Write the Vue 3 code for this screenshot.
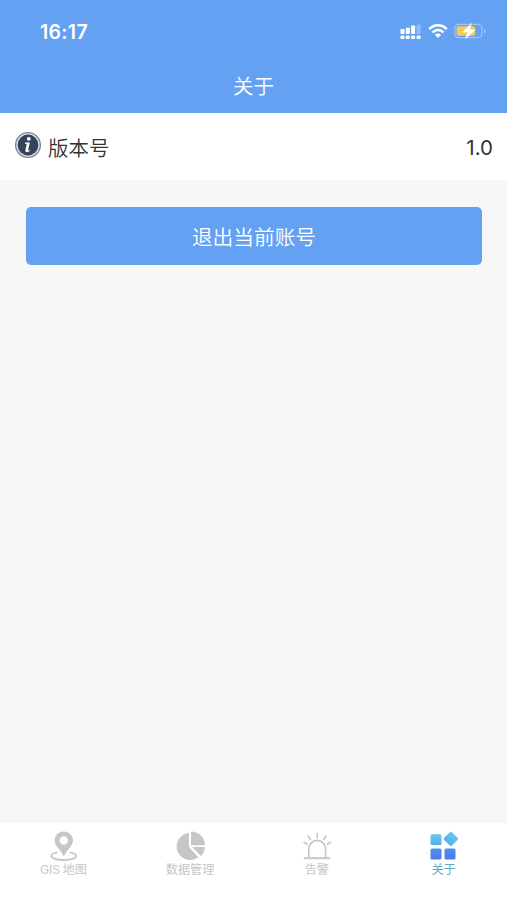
<template>
  <div class="page">
    <!-- 状态栏 + 标题 -->
    <header class="header">
      <div class="status">
        <span class="status__time">16:17</span>
        <div class="status__icons">
          <svg class="signal" width="22" height="16" viewBox="0 0 22 16">
            <g fill="#fff">
              <rect x="0.5" y="5" width="4" height="5" rx="0.8" />
              <rect x="5.8" y="3.8" width="4" height="6.2" rx="0.8" />
              <rect x="11.1" y="1.5" width="4" height="8.5" rx="0.8" />
              <rect x="16.6" y="0.5" width="4" height="9.5" rx="0.8" opacity=".3" />
              <rect x="0.5" y="11.5" width="4" height="3.6" rx="1" />
              <rect x="5.8" y="11.5" width="4" height="3.6" rx="1" />
              <rect x="11.1" y="11.5" width="4" height="3.6" rx="1" />
              <rect x="16.6" y="11.5" width="4" height="3.6" rx="1" />
            </g>
          </svg>
          <svg class="wifi" width="20" height="16" viewBox="0 0 20 16">
            <g fill="none" stroke="#fff" stroke-width="2.5">
              <path d="M1.2 6.2C6 .9 14 .9 18.8 6.2" />
              <path d="M4.5 9.5c3-3.2 8-3.2 11 0" />
            </g>
            <path d="M6.9 11.7c1.8-1.6 4.4-1.6 6.2 0L10 14.9z" fill="#fff" />
          </svg>
          <svg class="battery" width="33" height="18" viewBox="0 0 33 18">
            <rect x="0.8" y="2.3" width="27" height="13.4" rx="4" fill="none" stroke="#a0c6ec" stroke-width="1.2" />
            <path d="M29.8 6.5c2.4.8 2.4 4.2 0 5z" fill="#a0c6ec" />
            <rect x="2.6" y="4.2" width="18.6" height="9.6" rx="2" fill="#f3cd57" />
            <path d="M18 .8 8.4 10.2h5.2L11 17.4 21.6 7.5h-5.8z" fill="#fff" />
          </svg>
        </div>
      </div>
      <h1 class="header__title">关于</h1>
    </header>

    <!-- 版本号 -->
    <div class="cell">
      <svg class="cell__icon" width="28" height="28" viewBox="0 0 28 28">
        <circle cx="14" cy="14" r="12.4" fill="#d9dde3" stroke="#7d8492" stroke-width="1.3" />
        <circle cx="14" cy="14" r="10.4" fill="#35425b" />
        <circle cx="14.8" cy="7.8" r="1.9" fill="#fff" />
        <path d="M11 11.5h4.8l-1.7 7.7c-.1.6.7.5 1.8-.3l.3.6c-2.2 2.2-5.3 2.2-4.8-.2l1.4-6.6H11z" fill="#fff" />
      </svg>
      <span class="cell__label">版本号</span>
      <span class="cell__value">{{ version }}</span>
    </div>

    <main class="content">
      <button class="logout" type="button">退出当前账号</button>
    </main>

    <!-- 底部导航 -->
    <nav class="tabbar">
      <div
        v-for="tab in tabs"
        :key="tab.key"
        class="tabbar__item"
        :class="{ 'tabbar__item--active': tab.key === active }"
        @click="active = tab.key"
      >
        <svg v-if="tab.key === 'map'" width="30" height="30" viewBox="0 0 30 30">
          <path d="M9.5 21.4C5.5 22 3.3 23.3 3.3 25c0 2.3 5.5 4 12.5 4s12.5-1.7 12.5-4c0-1.7-2.5-3-6.5-3.6" fill="none" stroke="#c6c6c6" stroke-width="1.8" />
          <path d="M15.8.6c-5.3 0-9.2 3.9-9.2 8.9 0 5.500 6.200 9 9.200 16.100 3-7.100 9.200-10.600 9.200-16.100 0-5-3.900-8.900-9.200-8.900zm0 4.700a4.200 4.200 0 1 1 0 8.400 4.200 4.200 0 0 1 0-8.400z" fill="#c6c6c6" fill-rule="evenodd" />
        </svg>
        <svg v-else-if="tab.key === 'data'" width="30" height="30" viewBox="0 0 30 30">
          <g fill="#c6c6c6">
            <path d="M14 2v14l9.300 10.200A13.500 13.500 0 1 1 14 2z" />
            <path d="M16 .5c7.600 0 13.800 5.700 14 13.700H16z" />
            <path d="M17.200 16H30c-.2 3.700-1.700 6.700-4.200 9z" />
          </g>
        </svg>
        <svg v-else-if="tab.key === 'alarm'" width="30" height="30" viewBox="0 0 30 30">
          <g fill="none" stroke="#c6c6c6" stroke-width="1.6">
            <path d="M6.800 26.500v-8.700a8.400 8.400 0 0 1 16.800 0v8.700" />
            <path d="M1.800 27.200h26.400" stroke-width="2" />
            <path d="M15.200 2v5.500M6 4.500l2.800 4.600M24 4.500l-2.600 4.600M1.500 11l4.200 2.500M29 11l-4.200 2.500" />
          </g>
        </svg>
        <svg v-else width="30" height="30" viewBox="0 0 30 30">
          <defs>
            <linearGradient id="tileTop" x1="0" y1="0" x2="0" y2="1">
              <stop offset="0" stop-color="#69c7ee" />
              <stop offset="1" stop-color="#53b0ec" />
            </linearGradient>
            <linearGradient id="tileBottom" x1="0" y1="0" x2="0" y2="1">
              <stop offset="0" stop-color="#4b91ed" />
              <stop offset="1" stop-color="#5079ed" />
            </linearGradient>
          </defs>
          <rect x="1.5" y="3.3" width="11" height="10.7" rx="1.6" fill="url(#tileTop)" />
          <rect x="16.4" y="2.4" width="11" height="11" rx="1.5" transform="rotate(45 21.9 7.9)" fill="url(#tileTop)" />
          <rect x="1.5" y="17.5" width="11" height="11" rx="1.6" fill="url(#tileBottom)" />
          <rect x="15.5" y="17.5" width="11" height="11" rx="1.6" fill="url(#tileBottom)" />
        </svg>
        <span class="tabbar__text">{{ tab.text }}</span>
      </div>
    </nav>
  </div>
</template>

<script setup>
import { ref } from 'vue'

const version = ref('1.0')

/* 当前选中的标签 */
const active = ref('about')

const tabs = [
  { key: 'map', text: 'GIS 地图' },
  { key: 'data', text: '数据管理' },
  { key: 'alarm', text: '告警' },
  { key: 'about', text: '关于' }
]
</script>

<style>
body {
  margin: 0;
  background: #f7f7f7;
}
</style>

<style scoped>
.page {
  display: flex;
  flex-direction: column;
  height: 100vh;
  overflow: hidden;
  background: #f7f7f7;
  font-family: Inter, 'Noto Sans CJK SC', sans-serif;
}
.header {
  flex: none;
  height: 113px;
  color: #fff;
  background: #64a1f3;
}
.status {
  display: flex;
  align-items: center;
  justify-content: space-between;
  height: 62px;
  padding: 0 20px 0 40px;
}
.status__time {
  padding-top: 1px;
  font-size: 19.5px;
  font-weight: 600;
  letter-spacing: 0.3px;
}
.status__icons {
  display: flex;
  align-items: center;
}
.signal {
  margin-top: 2px;
}
.wifi {
  margin: 0 6px;
}
.header__title {
  margin: 0;
  font-size: 20.5px;
  font-weight: 350;
  line-height: 49px;
  text-align: center;
}
.cell {
  display: flex;
  flex: none;
  align-items: center;
  box-sizing: border-box;
  height: 67px;
  padding: 1px 14px 0;
  color: #333;
  font-size: 20.5px;
  background: #fff;
}
.cell__icon {
  margin: 0 6px 4px 0;
}
.cell__label {
  font-weight: 350;
}
.cell__value {
  margin-left: auto;
  padding-top: 1px;
}
.content {
  flex: 1;
  padding: 27px 25px 0 26px;
}
.logout {
  display: block;
  width: 100%;
  height: 58px;
  padding: 3px 0 0;
  border: none;
  border-radius: 5px;
  color: #fff;
  font-family: inherit;
  font-size: 20.7px;
  font-weight: 350;
  line-height: 55px;
  background: #64a1f3;
}
.tabbar {
  display: flex;
  flex: none;
  height: 77px;
  background: #fff;
}
.tabbar__item {
  display: flex;
  flex: 1;
  flex-direction: column;
  align-items: center;
  padding-top: 8px;
  color: #c6c6c6;
}
.tabbar__text {
  font-size: 12.2px;
  line-height: 18px;
  word-spacing: -1px;
}
.tabbar__item--active {
  color: #62aac6;
}
</style>
